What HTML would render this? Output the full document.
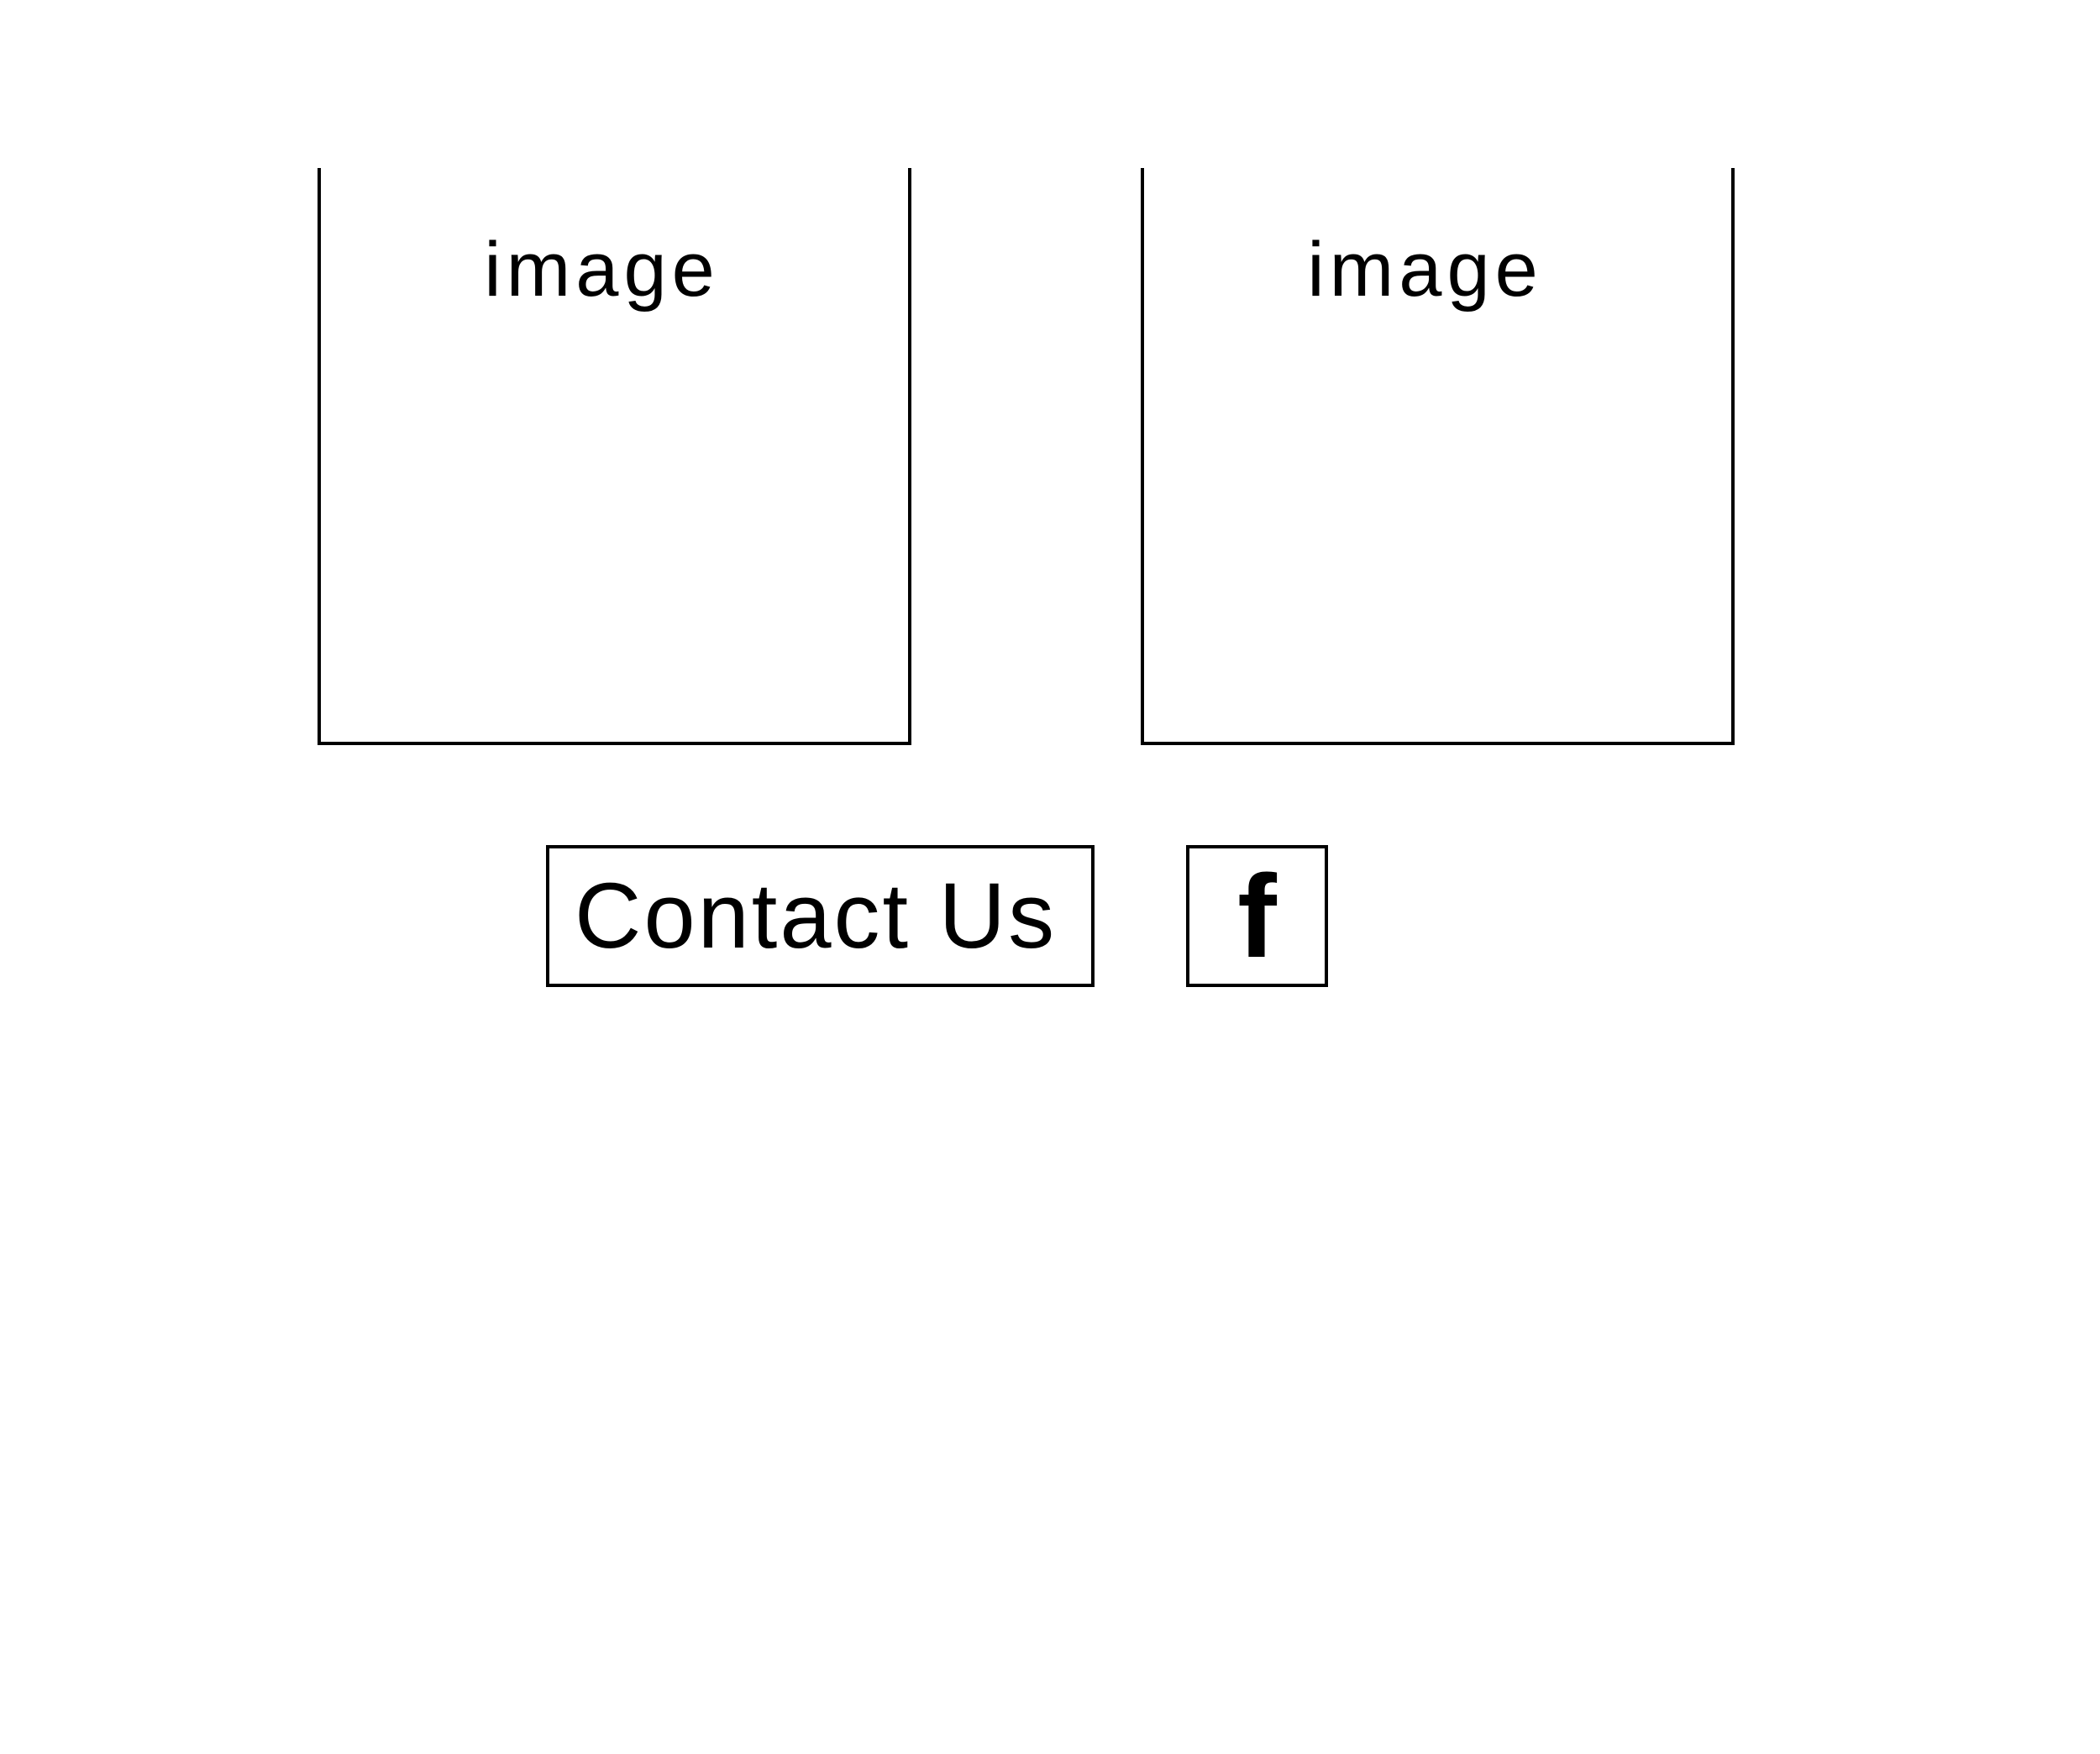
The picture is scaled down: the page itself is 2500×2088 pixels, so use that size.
<!DOCTYPE html>
<html><head><meta charset="utf-8"><style>
html,body{margin:0;padding:0;background:#fff;width:2500px;height:2088px;overflow:hidden;position:relative;font-family:"Liberation Sans",sans-serif;color:#000}
.img{position:absolute;top:200px;width:707px;height:687px;border:4px solid #000;border-top:none;box-sizing:border-box}
.img span{position:absolute;left:0;right:30px;top:75px;text-align:center;font-size:92px;line-height:1;letter-spacing:6px}
.box{position:absolute;top:1006px;height:169px;border:4px solid #000;box-sizing:border-box;display:flex;align-items:center;justify-content:center}
</style></head><body>
<div class="img" style="left:378px"><span>image</span></div>
<div class="img" style="left:1358px"><span>image</span></div>
<div class="box" style="left:650px;width:653px;font-size:110px;letter-spacing:3px;justify-content:flex-start;padding-left:30px">Contact Us</div>
<div class="box" style="left:1412px;width:169px;font-size:140px;font-weight:bold">f</div>
</body></html>
